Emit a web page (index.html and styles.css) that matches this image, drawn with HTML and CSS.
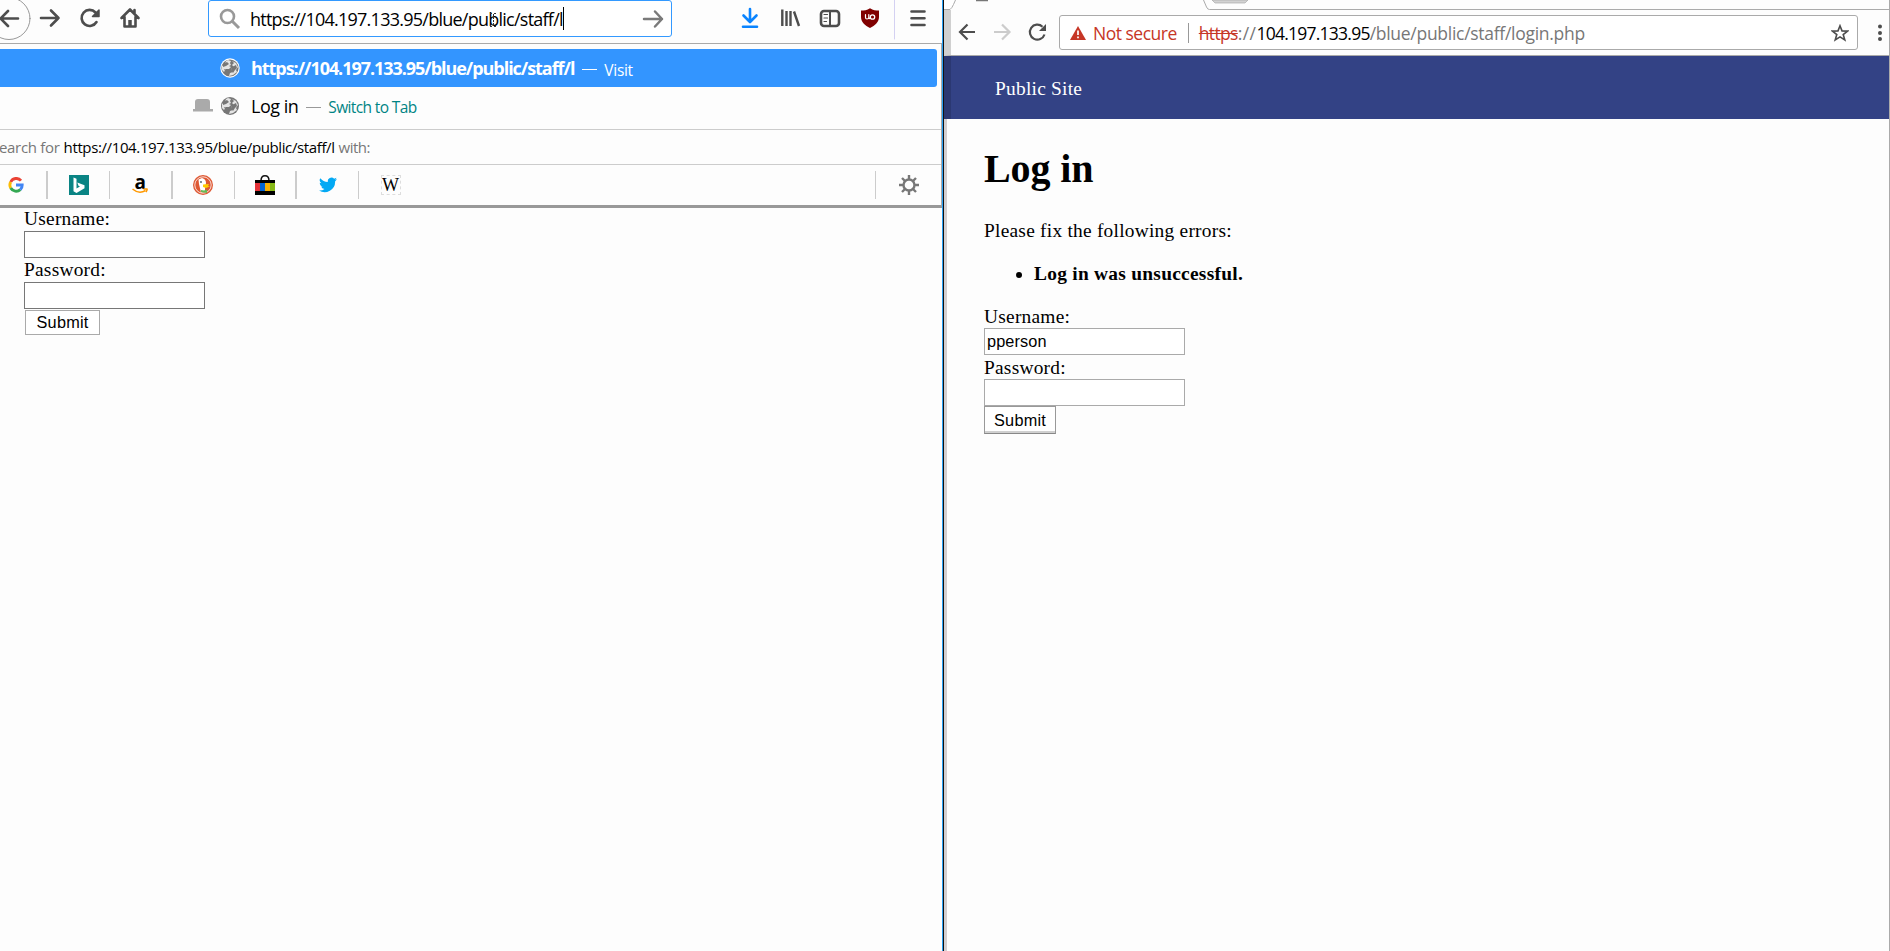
FILE: index.html
```html
<!DOCTYPE html>
<html lang="en"><head><meta charset="utf-8"><title>Log in</title><link rel="stylesheet" href="styles.css"></head>
<body>
<div class="desktop">
<section class="firefox">
  <div class="toolbar">
    <svg class="nav-icons" width="208" height="43" viewBox="0 0 208 43" fill="none" stroke="#4d4d4d" stroke-width="2.6" stroke-linecap="round" stroke-linejoin="round">
      <circle cx="9" cy="18.500" r="21" stroke="#999" stroke-width="1"/>
      <path d="M18 18.500H1M8 11L0.500 18.500L8 26"/>
      <path d="M41 18H58.500M51 10.500L58.500 18L51 25.500"/>
      <path d="M96.500 22A8 8 0 1 1 95.500 12.500"/><path d="M99 10V16.500H92.500Z" fill="#4d4d4d" stroke-width="1.500"/>
      <path d="M121.500 18L130 9.500L138.500 18M124.500 17V26.500H135.500V17M134.500 10V13"/><path d="M130 20V26" stroke-width="3.500" stroke-linecap="butt"/>
    </svg>
    <div class="urlbar">
      <svg class="search-icon" width="22" height="22" viewBox="0 0 22 22" fill="none" stroke="#999" stroke-width="2.600"><circle cx="8.500" cy="8.500" r="6.500"/><path d="M13 13L20 20" stroke-width="3"/></svg>
      <span class="url-text">https://104.197.133.95/blue/public/staff/l</span><i class="caret"></i>
      <svg class="go" width="22" height="20" viewBox="0 0 22 20" fill="none" stroke="#7a7a7a" stroke-width="2.500" stroke-linecap="round" stroke-linejoin="round"><path d="M2 10H20M13 2.500L20 10L13 17.500"/></svg>
      <svg class="ibeam" width="9" height="16" viewBox="0 0 9 16" fill="none" stroke="#333" stroke-width="1" stroke-dasharray="2 1"><path d="M1 1.500H4M5 1.500H8M4.500 2V14M1 14.500H4M5 14.500H8"/></svg>
    </div>
    <svg class="tool-icons" width="202" height="43" viewBox="740 0 202 43" fill="none" stroke="#4d4d4d" stroke-width="2.600" stroke-linecap="round" stroke-linejoin="round">
      <path d="M750 9V21M743.500 15.500L750 22L756.500 15.500M743 26.800H757" stroke="#0a84ff"/>
      <path d="M782.300 9.500V26M786.500 11V26M790.500 11V26M794 11.500L799 26" stroke-linecap="butt" stroke-width="2.400"/>
      <rect x="821" y="11" width="18" height="15" rx="3"/><path d="M830 11V26" stroke-width="2"/><path d="M824 14.500H827.500M824 18H827.500M824 21.500H826.500" stroke-width="1.200"/>
      <path d="M870 8.200C873 10.500 876 10.600 879 10.600V17C879 22 875 25.500 870 28C865 25.500 861 22 861 17V10.600C864 10.600 867 10.500 870 8.200Z" fill="#800000" stroke="none"/>
      <path d="M865.500 14.500V17.500Q865.500 19 867 19Q868.800 19 868.800 17.500V14.500M868.800 17.500Q869.200 19.300 870 18" stroke="#fff" stroke-width="1.200"/><circle cx="872.500" cy="17" r="2.200" stroke="#fff" stroke-width="1.300"/>
      <path d="M894.500 0V39" stroke="#d4d1f2" stroke-width="1"/>
      <path d="M911.500 11.500H924.500M911.500 18.200H924.500M911.500 25H924.500"/>
    </svg>
  </div>
  <div class="popup">
    <div class="result active">
      <svg class="globe" width="20" height="20" viewBox="0 0 20 20"><circle cx="10" cy="10" r="9.700" fill="#fff"/><circle cx="10" cy="10" r="8.600" fill="#777"/><path d="M8 2L11 3L10 5L11 7L9 8L11 9L9 11H6L4 14L2 12V8L5 6L6 3ZM12 3L16 5L18 9L16 12L17 14L13 17L9 18L10 15L13 14L11 11L14 9L12 7L14 5Z" fill="#e4e4e4"/><path d="M3 6L7 4L9 6L6 8L3 9ZM12 9L16 7L17 10L15 12L13 15L11 12ZM4 11L8 12L9 15L7 17Z" fill="#777"/></svg>
      <b class="title">https://104.197.133.95/blue/public/staff/l</b><i class="dash"></i><span class="action">Visit</span>
    </div>
    <div class="result second">
      <svg class="tab-icon" width="20" height="13" viewBox="0 0 20 13"><path d="M2 10V3Q2 0 5 0H14Q17 0 17 3V10H20V12.500H0V10Z" fill="#aaa"/></svg>
      <svg class="globe" width="20" height="20" viewBox="0 0 20 20"><circle cx="10" cy="10" r="9" fill="#777"/><path d="M8 2L11 3L10 5L11 7L9 8L11 9L9 11H6L4 14L2 12V8L5 6L6 3ZM12 3L16 5L18 9L16 12L17 14L13 17L9 18L10 15L13 14L11 11L14 9L12 7L14 5Z" fill="#e4e4e4"/><path d="M3 6L7 4L9 6L6 8L3 9ZM12 9L16 7L17 10L15 12L13 15L11 12ZM4 11L8 12L9 15L7 17Z" fill="#777"/></svg>
      <span class="title">Log in</span><i class="dash"></i><span class="action">Switch to Tab</span>
    </div>
    <div class="search-for"><span class="prefix">Search for</span><span class="query">https://104.197.133.95/blue/public/staff/l</span><span class="suffix">with:</span></div>
    <div class="engines">
      <div class="engine first thick"><svg width="16" height="16" viewBox="0 0 16 16" fill="none" stroke-width="2.900"><path d="M13 3.600A6.200 6.200 0 0 0 2.700 5" stroke="#ea4335"/><path d="M2.700 5A6.200 6.200 0 0 0 2.700 11" stroke="#fbbc05"/><path d="M2.700 11A6.200 6.200 0 0 0 12.300 12.600" stroke="#34a853"/><path d="M12.300 12.600A6.200 6.200 0 0 0 14.200 8H8" stroke="#4285f4"/></svg></div>
      <div class="engine"><svg width="20" height="20" viewBox="0 0 20 20"><path d="M0 0H20V20H0Z" fill="#0a8484"/><path d="M4.500 2.500L7.500 3.700V13.500L11 11.500L9.500 10.700L8.300 7.600L15.500 10.200V13.300L7.500 18L4.500 16.200Z" fill="#fff"/></svg></div>
      <div class="engine amazon thick"><span class="amazon-letter">a</span><svg width="16" height="6" viewBox="0 0 16 6" fill="none" stroke="#f90" stroke-width="1.500"><path d="M.5 1Q7 6.500 13.500 2.500M11.500 1H15Q15.500 2 14 4"/></svg></div>
      <div class="engine"><svg width="20" height="20" viewBox="0 0 20 20"><circle cx="10" cy="10" r="10" fill="#de5833"/><circle cx="10" cy="10" r="8.200" fill="none" stroke="#fff" stroke-width=".8"/><path d="M5.500 4.500L9 3Q13 4 13 8L12 14V17L8 17.500L6 9Z" fill="#fff"/><path d="M10 9.500L16 9L15 11L17 11.500L13 13L10 12Z" fill="#fc0"/><path d="M8 15L11 15.500L14 14.500V18L8 17Z" fill="#6b5"/><circle cx="8" cy="7" r=".9" fill="#456"/></svg></div>
      <div class="engine thick"><svg width="20" height="20" viewBox="0 0 20 20"><path d="M6 6Q6 .8 10 .8T14 6" fill="none" stroke="#111" stroke-width="1.500"/><path d="M0 5H20V20H0Z" fill="#000"/><path d="M0 8H5V16H0Z" fill="#e53238"/><path d="M5 8H10V16H5Z" fill="#0064d2"/><path d="M10 8H15V16H10Z" fill="#f5af02"/><path d="M15 8H20V16H15Z" fill="#86b817"/></svg></div>
      <div class="engine"><svg width="18" height="16" viewBox="0 0 24 20"><path d="M24 2.400A10 10 0 0 1 21.200 3.100A5 5 0 0 0 23.300 .4A10 10 0 0 1 20.200 1.600A4.900 4.900 0 0 0 11.800 6A14 14 0 0 1 1.700 1A4.900 4.900 0 0 0 3.200 7.500A5 5 0 0 1 1 6.900A4.900 4.900 0 0 0 4.900 11.700A5 5 0 0 1 2.700 11.800A4.900 4.900 0 0 0 7.300 15.200A10 10 0 0 1 0 17.200A14 14 0 0 0 21.500 4.900A10 10 0 0 0 24 2.400Z" fill="#03a9f4"/></svg></div>
      <div class="engine last"><span class="wiki">W</span></div>
      <div class="settings"><svg width="20" height="20" viewBox="0 0 20 20" fill="none" stroke="#777"><circle cx="10" cy="10" r="5.500" stroke-width="2.400"/><path d="M10 0V4M10 16V20M0 10H4M16 10H20M3 3L6 6M14 14L17 17M3 17L6 14M14 6L17 3" stroke-width="2.400"/></svg></div>
    </div>
  </div>
  <form class="login left-form">
    <label>Username:</label><input type="text"><label>Password:</label><input type="password"><button type="button">Submit</button>
  </form>
</section>
<section class="chrome">
  <svg class="tabs" width="945" height="10" viewBox="944 0 945 10"><path d="M944 0H957L951.500 9.500H944Z" fill="#fff"/><path d="M944 9.500H950Q952 8 953.500 4.500L955.500 0M1203.500 0L1206.500 7Q1207.500 9.500 1209.500 9.500H1890" fill="none" stroke="#aaa"/><path d="M1212 0H1248L1245 3H1215Z" fill="#d2d2d2" stroke="#aaa" stroke-width=".7"/><path d="M976 .5H988" stroke="#777" stroke-width="1.500"/></svg>
  <div class="chrome-bar">
    <svg width="108" height="45" viewBox="951 10 108 45" fill="none" stroke="#4d4d4d" stroke-width="2.200"><path d="M975 32H960.500M967.500 24.500L960 32L967.500 39.500"/><path d="M994 32H1009M1002 24.500L1009.500 32L1002 39.500" stroke="#ccc"/><path d="M1044.500 34.500A7.500 7.500 0 1 1 1042.500 26.700"/><path d="M1046 24V31H1039Z" fill="#4d4d4d" stroke="none"/></svg>
    <div class="omnibox">
      <svg width="16" height="14" viewBox="0 0 16 14"><path d="M8 0L16 14H0Z" fill="#c63626"/><path d="M8 4.500V9M8 10.500V12.300" stroke="#fff" stroke-width="1.700"/></svg>
      <span class="insecure">Not secure</span><i class="separator"></i>
      <span class="scheme">https</span><span class="slashes">://</span><span class="host">104.197.133.95</span><span class="path">/blue/public/staff/login.php</span>
      <svg class="star" width="18" height="18" viewBox="0 0 18 18" fill="none" stroke="#4d4d4d" stroke-width="1.600"><path d="M9 1.800L11 6.900L16.600 7.100L12.200 10.500L13.800 16L9 12.900L4.200 16L5.800 10.500L1.400 7.100L7 6.900Z"/></svg>
    </div>
    <svg class="dots" width="6" height="18" viewBox="0 0 6 18" fill="#4d4d4d"><circle cx="3" cy="2.500" r="2"/><circle cx="3" cy="9" r="2"/><circle cx="3" cy="15" r="2"/></svg>
  </div>
  <header>Public Site</header>
  <main>
    <h1>Log in</h1>
    <p>Please fix the following errors:</p>
    <ul><li>Log in was unsuccessful.</li></ul>
    <form class="login right-form"><label>Username:</label><input type="text" value="pperson"><label>Password:</label><input type="password"><button type="button">Submit</button></form>
  </main>
</section>
</div>
</body></html>
```
FILE: styles.css
```css
*{box-sizing:border-box}
body{margin:0;background:#fdfdfd;color:#000;overflow:hidden;font-family:"Liberation Serif",serif;font-size:19.4px;letter-spacing:.24px}
.desktop{display:grid;grid-template-columns:944px 946px;width:1890px;height:951px}
svg{display:block;flex:none}
i{flex:none}
.firefox{border-right:1px solid #111;box-shadow:inset -1px 0 #28a0f5}
.toolbar{height:43px;display:flex;align-items:flex-start}
.urlbar{width:464px;height:37px;border:1px solid #3399ff;border-radius:3px;display:flex;align-items:center;padding-left:10px;position:relative;margin-right:68px;background:#fff;font:18px "Open Sans",sans-serif;letter-spacing:-.75px}
.search-icon{margin-right:9px}
.url-text{width:313px;white-space:nowrap}
.caret{width:1px;height:23px;background:#000}
.go{margin-left:78px}
.ibeam{position:absolute;left:280px;top:11px}
.popup{height:165px;margin-right:1px;border:1px solid #aaa;border-left:0;border-bottom:3px solid #999;padding-top:5px;background:#fdfdfd;font-family:"Open Sans",sans-serif}
.result{height:38px;display:flex;align-items:center;padding-left:193px;white-space:nowrap}
.active{background:#3395ff;color:#fff;width:937px;border-radius:0 3px 3px 0;padding-left:220px}
.second{height:37px}
.globe{margin-right:11px}
.tab-icon{margin-right:7px}
.title{font-size:18px;letter-spacing:-.5px}
.active .title{letter-spacing:-1.05px}
.active .dash{background:#fff}
.dash{width:15px;height:1px;background:#999;margin:3px 7px 0 8px}
.action{font-size:15.500px;margin-top:3px;letter-spacing:-.3px}
.second .action{color:#008484;letter-spacing:-.62px}
.search-for{height:35px;margin-top:5px;border-top:1px solid #ccc;display:flex;align-items:center;gap:4px;font-size:15px;color:#777;padding-left:0;text-indent:0;white-space:nowrap}
.prefix{letter-spacing:-.3px;margin-left:-9px}
.query{color:#000;letter-spacing:-.38px}
.suffix{letter-spacing:-.5px}
.engines{display:flex;align-items:center;border-top:1px solid #ccc;height:41px}
.engine{width:62.300px;height:28px;display:flex;align-items:center;justify-content:center;border-right:1px solid #ccc}
.thick{border-right-width:2px}
.first{width:48px;justify-content:flex-start;padding-left:8px}
.last{border:0}
.amazon{flex-direction:column}
.amazon-letter{font:bold 19px/12px "Open Sans",sans-serif}
.wiki{font:18px "Liberation Serif",serif;border:1px dashed #ddd;width:20px;height:20px;line-height:18px;display:flex;justify-content:center}
.settings{margin-left:auto;width:66px;height:28px;border-left:1px solid #ccc;display:flex;align-items:center;justify-content:center}
.login{display:flex;flex-direction:column;align-items:flex-start}
.login label{height:22px;line-height:22px}
.login input{height:27px;margin:1px 0;padding:0 2px;border:1px solid #777;background:#fff;font:16.3px "Liberation Sans",sans-serif;letter-spacing:.1px;width:181px}
.login button{height:25px;width:75px;margin:0 0 0 1px;padding:0;border:1px solid #aaa;background:#fff;color:#000;font:16.3px "Liberation Sans",sans-serif;letter-spacing:.2px}
.left-form{padding:0 24px}
.chrome{border-right:1px solid #aaa;box-shadow:inset 3px 0 #d2cfd1;display:flex;flex-direction:column}
.chrome-bar{height:46px;border-bottom:1px solid #aaa;display:flex;align-items:center;border-left:7px solid #d0d0d0}
.omnibox{width:799px;height:35px;border:1px solid #aaa;border-radius:3px;display:flex;align-items:center;padding-left:10px;background:#fff;font:17.500px "Open Sans",sans-serif;white-space:nowrap}
.insecure{color:#c63626;margin-left:7px;letter-spacing:-.5px}
.separator{width:1px;height:20px;background:#999;margin:0 10px 0 11px}
.scheme{color:#c63626;text-decoration:line-through;letter-spacing:-.65px}
.slashes,.path{color:#777}
.slashes{letter-spacing:.4px}
.host{letter-spacing:-.76px}
.path{letter-spacing:-.28px}
.star{margin:0 8px 0 auto}
.dots{margin:0 6px 0 19px}
header{height:63px;background:#334285;border-left:7px solid #2b3872;color:#fff;padding-left:44px;line-height:66px}
main{padding-left:40px}
h1{font-size:40px;line-height:46px;margin:27px 0 28px;letter-spacing:-.1px}
p{margin:0;line-height:22px}
ul{margin:21px 0 20px;padding-left:50px;line-height:22px;font-weight:bold;letter-spacing:.27px}
.right-form label{line-height:24px}
.right-form input{width:201px;border-color:#aaa}
.right-form button{width:72px;height:28px;margin:-1px 0 0;border-color:#999;border-bottom:1px solid #888;box-shadow:inset 0 -2px #d0d0d0}
```
